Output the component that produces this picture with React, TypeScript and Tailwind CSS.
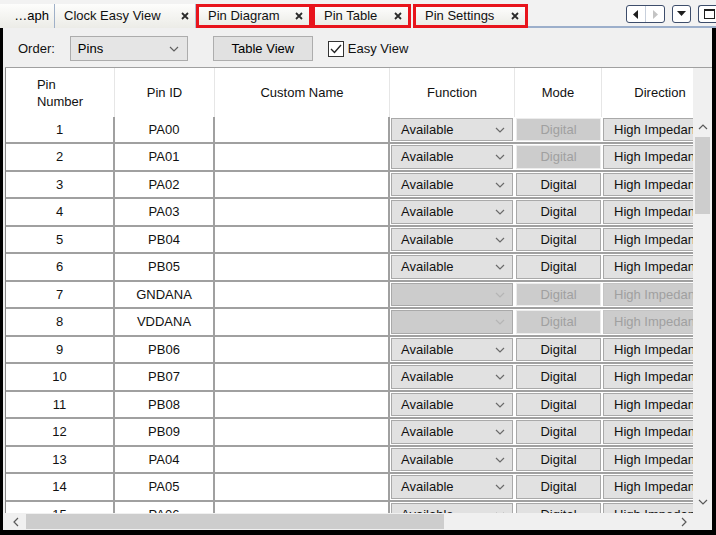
import React from "react"

type Row = { n: number; id: string; fnOff?: boolean; modeOff?: boolean; dirOff?: boolean }

const rows: Row[] = [
  { n: 1, id: "PA00", modeOff: true },
  { n: 2, id: "PA01", modeOff: true },
  { n: 3, id: "PA02" },
  { n: 4, id: "PA03" },
  { n: 5, id: "PB04" },
  { n: 6, id: "PB05" },
  { n: 7, id: "GNDANA", fnOff: true, modeOff: true, dirOff: true },
  { n: 8, id: "VDDANA", fnOff: true, modeOff: true, dirOff: true },
  { n: 9, id: "PB06" },
  { n: 10, id: "PB07" },
  { n: 11, id: "PB08" },
  { n: 12, id: "PB09" },
  { n: 13, id: "PA04" },
  { n: 14, id: "PA05" },
  { n: 15, id: "PA06" },
]

function Chevron({ color = "#6b6b6b", up = false }: { color?: string; up?: boolean }) {
  return (
    <svg width="10" height="6" viewBox="0 0 10 6">
      <polyline
        points={up ? "1,5 5,1 9,5" : "1,1 5,5 9,1"}
        fill="none"
        stroke={color}
        strokeWidth="1.2"
      />
    </svg>
  )
}

function CloseX() {
  return (
    <svg width="8" height="8" viewBox="0 0 8 8" className="shrink-0">
      <path d="M1 1 L7 7 M7 1 L1 7" stroke="#2b2b2b" strokeWidth="1.8" />
    </svg>
  )
}

function Tab({ label, width, marked, close = true }: { label: string; width: number; marked?: boolean; close?: boolean }) {
  return (
    <div
      style={{ width }}
      className={
        "h-[24px] flex items-center justify-between pl-[9px] pr-[6px] bg-gradient-to-b from-[#fdfdfc] to-[#ecece7] " +
        (marked ? "border-[3px] border-[#e8141c]" : "border-r border-[#b3c0d4]")
      }
    >
      <span className="whitespace-nowrap text-[#111]">{label}</span>
      {close && <CloseX />}
    </div>
  )
}

function TabBar() {
  return (
    <div className="h-[28px] flex items-end bg-[#f2f2f2]">
      <div className="w-[55px] h-[24px] flex items-center justify-end pr-[5px] border-r border-[#9fb0c8] bg-gradient-to-b from-[#fdfdfc] to-[#ecece7]">
        <span>…aph</span>
      </div>
      <Tab label="Clock Easy View" width={141} />
      <Tab label="Pin Diagram" width={116} marked />
      <Tab label="Pin Table" width={99} marked />
      <div className="w-[2px]" />
      <Tab label="Pin Settings" width={115} marked />
      <div className="flex-1 h-full flex items-start justify-end gap-[7px] pt-[5px] border-b-2 border-[#9cafcb] pr-0">
        <div className="flex h-[18px] w-[39px] rounded-[3px] border border-[#3d4d6b] bg-white">
          <div className="flex-1 flex items-center justify-center border-r border-[#c7cfdb]">
            <svg width="6" height="9" viewBox="0 0 6 9">
              <polygon points="5,0 5,9 0,4.5" fill="#1e1e1e" />
            </svg>
          </div>
          <div className="flex-1 flex items-center justify-center">
            <svg width="6" height="9" viewBox="0 0 6 9">
              <polygon points="1,0 1,9 6,4.5" fill="#c4c4c4" />
            </svg>
          </div>
        </div>
        <div className="h-[18px] w-[19px] rounded-[3px] border border-[#3d4d6b] bg-white flex items-center justify-center">
          <svg width="9" height="6" viewBox="0 0 9 6">
            <polygon points="0,0 9,0 4.5,5" fill="#1e1e1e" />
          </svg>
        </div>
        <div className="h-[18px] w-[18px] rounded-l-[3px] border border-r-0 border-[#3d4d6b] bg-white flex items-center justify-center pl-[3px]">
          <div className="w-[11px] h-[10px] border border-[#1e1e1e] border-t-2" />
        </div>
      </div>
    </div>
  )
}

function Toolbar() {
  return (
    <div className="h-[39px] flex items-center pl-[15px] pt-[2px]">
      <span className="text-[#111]">Order:</span>
      <div className="ml-[15px] w-[118px] h-[25px] bg-[#e5e5e5] border border-[#acacac] flex items-center justify-between pl-[7px] pr-[8px]">
        <span>Pins</span>
        <Chevron color="#606060" />
      </div>
      <div className="ml-[25px] w-[100px] h-[25px] bg-[#e1e1e1] border border-[#adadad] flex items-center justify-center">
        Table View
      </div>
      <div className="ml-[15px] w-[16px] h-[16px] bg-white border border-[#333] flex items-center justify-center">
        <svg width="12" height="10" viewBox="0 0 12 10">
          <polyline points="1,5 4.5,8.5 11,1" fill="none" stroke="#222" strokeWidth="1.4" />
        </svg>
      </div>
      <span className="ml-[4px] text-[#111]">Easy View</span>
    </div>
  )
}

function HeaderRow() {
  return (
    <div className="h-[49px] flex bg-white text-[#111] shrink-0">
      <div className="w-[109px] shrink-0 flex items-center justify-center border-r border-[#e6e6e6] pt-[1px]">
        <div className="leading-[17px] text-left">
          Pin
          <br />
          Number
        </div>
      </div>
      <div className="w-[100px] shrink-0 flex items-center justify-center border-r border-[#e6e6e6]">Pin ID</div>
      <div className="w-[175px] shrink-0 flex items-center justify-center border-r border-[#e6e6e6]">Custom Name</div>
      <div className="w-[125px] shrink-0 flex items-center justify-center border-r border-[#e6e6e6]">Function</div>
      <div className="w-[87px] shrink-0 flex items-center justify-center border-r border-[#e6e6e6]">Mode</div>
      <div className="w-[116px] shrink-0 flex items-center justify-center">Direction</div>
    </div>
  )
}

function BodyRow({ row, tall }: { row: Row; tall: boolean }) {
  return (
    <div className={"flex shrink-0 border-b-2 border-[#a0a0a0] bg-white " + (tall ? "h-[28px]" : "h-[27px]")}>
      <div className="w-[109px] shrink-0 flex items-center justify-center border-r-2 border-[#a0a0a0] text-[#111]">
        {row.n}
      </div>
      <div className="w-[100px] shrink-0 flex items-center justify-center border-r-2 border-[#a0a0a0] text-[#111]">
        {row.id}
      </div>
      <div className="w-[175px] shrink-0 border-r-2 border-[#a0a0a0]" />
      <div className="w-[125px] shrink-0 p-[1px] pr-[2px]">
        <div
          className={
            "h-full flex items-center justify-between pl-[9px] pr-[7px] border border-[#a9a9a9] " +
            (row.fnOff ? "bg-[#cccccc]" : "bg-[#e1e1e1]")
          }
        >
          <span className="text-[#111]">{row.fnOff ? "" : "Available"}</span>
          <Chevron color={row.fnOff ? "#b5b5b5" : "#6b6b6b"} />
        </div>
      </div>
      <div className="w-[87px] shrink-0 p-[1px] pr-[1px]">
        <div
          className={
            "h-full flex items-center justify-center border " +
            (row.modeOff ? "bg-[#cccccc] border-[#ececec] text-[#a0a0a0]" : "bg-[#e1e1e1] border-[#a9a9a9] text-[#111]")
          }
        >
          Digital
        </div>
      </div>
      <div className="w-[120px] shrink-0 p-[1px] pr-0">
        <div
          className={
            "h-full flex items-center pl-[10px] border border-r-0 whitespace-nowrap overflow-hidden " +
            (row.dirOff ? "bg-[#cccccc] border-[#c4c4c4] text-[#a0a0a0]" : "bg-[#e1e1e1] border-[#a9a9a9] text-[#111]")
          }
        >
          High Impedance
        </div>
      </div>
    </div>
  )
}

function VScroll() {
  return (
    <div className="w-[19px] shrink-0 flex flex-col bg-[#f0f0f0]">
      <div className="h-[49px] shrink-0" />
      <div className="h-[20px] shrink-0 flex items-center justify-center">
        <Chevron color="#5a5a5a" up />
      </div>
      <div className="h-[77px] mx-[2px] shrink-0 bg-[#cdcdcd]" />
      <div className="flex-1" />
      <div className="h-[22px] shrink-0 flex items-center justify-center">
        <Chevron color="#5a5a5a" />
      </div>
    </div>
  )
}

function HScroll() {
  return (
    <div className="h-[17px] shrink-0 flex bg-[#f0f0f0]">
      <div className="w-[21px] flex items-center justify-center">
        <svg width="6" height="10" viewBox="0 0 6 10">
          <polyline points="5,1 1,5 5,9" fill="none" stroke="#5a5a5a" strokeWidth="1.2" />
        </svg>
      </div>
      <div className="w-[418px] my-[1px] bg-[#cdcdcd]" />
      <div className="flex-1 flex items-center justify-end pr-[7px]">
        <svg width="6" height="10" viewBox="0 0 6 10">
          <polyline points="1,1 5,5 1,9" fill="none" stroke="#5a5a5a" strokeWidth="1.2" />
        </svg>
      </div>
      <div className="w-[18px]" />
    </div>
  )
}

export default function App() {
  return (
    <div className="w-[716px] h-[535px] flex flex-col bg-[#f0f0f0] text-[13px] font-['Liberation_Sans',Arial,sans-serif] overflow-hidden">
      <TabBar />
      <div className="flex-1 min-h-0 flex flex-col border-l-[3px] border-r-[4px] border-b-[5px] border-black bg-[#f0f0f0]">
        <Toolbar />
        <div className="flex-1 min-h-0 flex flex-col ml-[2px] border-t border-[#a0a0a0]">
          <div className="flex-1 min-h-0 flex">
            <div className="flex-1 min-w-0 flex flex-col overflow-hidden border-l border-[#8a8a8a]">
              <HeaderRow />
              {rows.map((r, i) => (
                <BodyRow key={r.n} row={r} tall={i % 2 === 1} />
              ))}
            </div>
            <VScroll />
          </div>
          <HScroll />
        </div>
      </div>
    </div>
  )
}
